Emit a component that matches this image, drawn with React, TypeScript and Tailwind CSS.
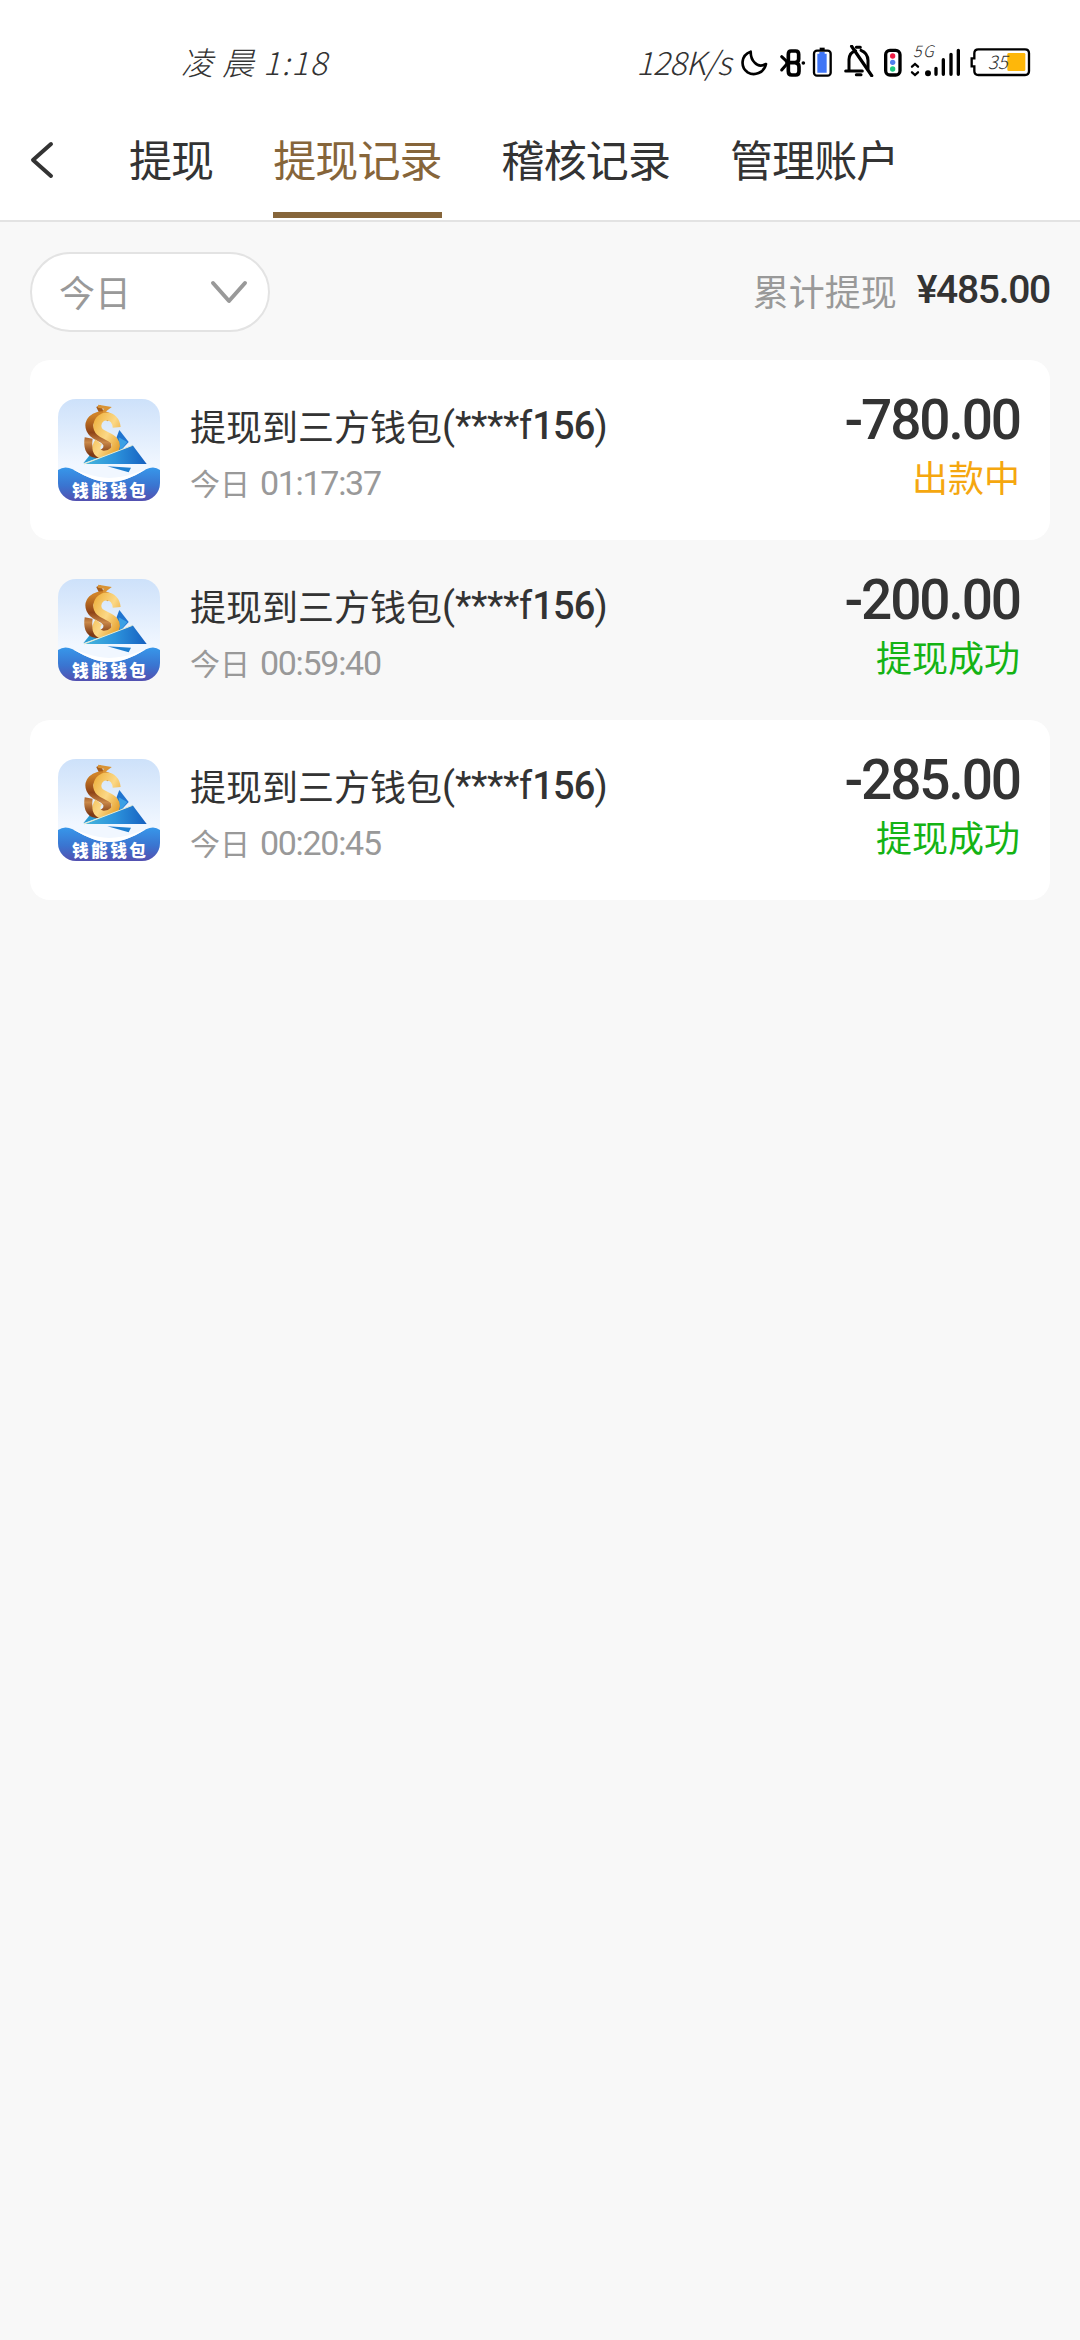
import { useState } from 'react'

type RecordItem = {
  id: number
  title: string
  account: string
  time: string
  amount: string
  status: 'pending' | 'success'
}

const TABS = ['提现', '提现记录', '稽核记录', '管理账户']

const RECORDS: RecordItem[] = [
  { id: 1, title: '提现到三方钱包', account: 'f156', time: '01:17:37', amount: '-780.00', status: 'pending' },
  { id: 2, title: '提现到三方钱包', account: 'f156', time: '00:59:40', amount: '-200.00', status: 'success' },
  { id: 3, title: '提现到三方钱包', account: 'f156', time: '00:20:45', amount: '-285.00', status: 'success' },
]

const STATUS = {
  pending: { text: '出款中', className: 'text-[#f5a70f]' },
  success: { text: '提现成功', className: 'text-[#14b314]' },
}

function StatusIcons() {
  return (
    <div className="flex h-8">
      {/* moon */}
      <svg className="h-8 w-[33px]" viewBox="355 44 99 96" fill="none" stroke="#000" strokeWidth="8" strokeLinejoin="round">
        <path d="M387 64C358 74 355 110 378 126C398 138 427 128 433 101C420 108 407 106 399 97C390 88 387 76 387 64Z" />
      </svg>
      {/* bluetooth */}
      <svg className="h-8 w-[35px]" viewBox="454 44 105 96" fill="none" stroke="#000" strokeWidth="11" strokeLinecap="round" strokeLinejoin="round">
        <path d="M500 72Q500 62 508 62H522Q531 62 531 72V86Q531 96 520 97H496M508 97H520Q532 98 532 109V123Q532 134 522 134H510Q500 134 500 123V72" />
        <path d="M480 79L499 97L480 119" strokeWidth="9" />
        <circle cx="545" cy="98" r="3" fill="#000" strokeWidth="5" />
      </svg>
      {/* phone battery */}
      <svg className="h-8 w-[27px]" viewBox="559 44 81 96" fill="none">
        <path d="M594 52H609V62H594Z" fill="#000" />
        <rect x="577" y="61" width="50" height="75" rx="9" fill="#fff" stroke="#000" strokeWidth="7" />
        <path d="M593 65H609V70H615V127H587V70H593Z" fill="#3f75f6" />
      </svg>
      {/* muted bell */}
      <svg className="h-8 w-[46px]" viewBox="10 44 138 96" fill="none" stroke="#000" strokeWidth="9" strokeLinecap="round">
        <path d="M52 120V88Q53 66 72 62M88 60Q108 68 109 90V116M42 122H92M74 51H86" />
        <path d="M74 133H88" strokeWidth="9" />
        <path d="M60 48L120 136" strokeWidth="10" />
      </svg>
      {/* traffic light */}
      <svg className="h-8 w-[28px]" viewBox="148 44 84 96">
        <rect x="162" y="60" width="43" height="74" rx="13" fill="#fff" stroke="#000" strokeWidth="10" />
        <circle cx="183" cy="77" r="8" fill="#ee1c43" />
        <circle cx="183" cy="96" r="8" fill="#4f7ff0" />
        <circle cx="183" cy="116" r="8" fill="#1fc982" />
      </svg>
      {/* signal */}
      <svg className="h-8 w-[60px] overflow-visible" viewBox="232 44 180 96" fill="none" stroke="#000" strokeWidth="10" strokeLinecap="round">
        <text
          x="244"
          y="81"
          fontSize="48"
          fontStyle="italic"
          fontWeight="300"
          fill="#333"
          stroke="none"
          textLength="62"
          className="font-['Noto_Sans_CJK_SC',sans-serif]"
        >
          5G
        </text>
        <path d="M241 109L250 101L259 109M241 126L250 134L259 126" strokeWidth="7" />
        <circle cx="289" cy="129" r="4" fill="#000" />
        <path d="M313 114V132M335 88V132M358 72V132M380 60V132" />
      </svg>
      {/* battery level */}
      <svg className="h-8 w-[64px]" viewBox="412 44 192 96" fill="none">
        <path
          d="M440 57H580Q592 57 592 69V122Q592 134 580 134H440Q428 134 428 122V108H420V84H428V69Q428 57 440 57Z"
          stroke="#000"
          strokeWidth="7"
        />
        <rect x="527" y="68" width="54" height="54" rx="4" fill="#feb70a" />
        <text
          x="468"
          y="117"
          fontSize="56"
          fontStyle="italic"
          fontWeight="300"
          fill="#333"
          className="font-['Noto_Sans_CJK_SC',sans-serif]"
        >
          35
        </text>
      </svg>
    </div>
  )
}

function StatusBar() {
  return (
    <div className="flex h-[104px] items-start justify-between pt-[45px] pr-[47px] pl-[181px] font-['Noto_Sans_CJK_SC',sans-serif] font-light text-[#333] italic">
      <div className="mt-[-2px] flex h-9 items-center text-[32px] leading-none">
        <span className="tracking-[9px]">凌晨</span>
        <span className="tracking-[1.5px]">1:18</span>
      </div>
      <div className="flex">
        <span className="mt-[-2px] mr-[9px] flex h-9 items-center text-[32px] leading-none tracking-[-0.6px]">128K/s</span>
        <StatusIcons />
      </div>
    </div>
  )
}

function WalletIcon() {
  return (
    <svg className="size-[102px] shrink-0 rounded-[18px]" viewBox="54 57 306 306">
      <defs>
        <linearGradient id="sky" x1="0" y1="0" x2="0" y2="1">
          <stop offset="0" stopColor="#cde1fa" />
          <stop offset="0.65" stopColor="#f1f7ff" />
        </linearGradient>
        <linearGradient id="wave" x1="0" y1="0" x2="0" y2="1">
          <stop offset="0" stopColor="#3797ea" />
          <stop offset="0.55" stopColor="#3a74d0" />
          <stop offset="1" stopColor="#5350b0" />
        </linearGradient>
        <linearGradient id="sail" x1="0" y1="0" x2="1" y2="0">
          <stop offset="0" stopColor="#47b7dc" />
          <stop offset="0.5" stopColor="#2c93dc" />
          <stop offset="1" stopColor="#1660c0" />
        </linearGradient>
        <linearGradient id="gold" x1="0" y1="0" x2="1" y2="1">
          <stop offset="0" stopColor="#f0b544" />
          <stop offset="0.5" stopColor="#fbd886" />
          <stop offset="1" stopColor="#e59f2c" />
        </linearGradient>
        <linearGradient id="bronze" x1="0" y1="0" x2="0" y2="1">
          <stop offset="0" stopColor="#cf8226" />
          <stop offset="0.45" stopColor="#8f4317" />
          <stop offset="0.7" stopColor="#c98848" />
          <stop offset="1" stopColor="#7f3a14" />
        </linearGradient>
      </defs>
      <rect x="54" y="57" width="306" height="306" fill="url(#sky)" />
      <path d="M238 150L266 186L240 214L214 214Z" fill="#1f74d0" />
      <path d="M236 172L262 186L240 214Z" fill="#3ba0e4" />
      <path d="M130 250L152 222L180 232Z" fill="#2b9bd2" />
      <g fill="none" strokeLinecap="butt">
        <path d="M175 78L182 92L186 104" stroke="#a35a1b" strokeWidth="14" />
        <path
          d="M212 116C196 96 150 106 148 136C148 162 176 170 192 180C214 196 200 222 170 222C146 220 142 198 146 174"
          stroke="url(#bronze)"
          strokeWidth="24"
        />
        <path d="M174 79L204 84L193 92V108" stroke="#d99334" strokeWidth="9" />
        <path
          d="M230 142C226 98 176 102 172 136C170 164 206 164 222 182C238 204 214 226 188 224C168 220 164 202 176 186"
          stroke="url(#gold)"
          strokeWidth="24"
        />
      </g>
      <path d="M132 252L278 196L320 252Z" fill="url(#sail)" />
      <path d="M132 252L278 196" stroke="#e6ecd0" strokeWidth="3" />
      <path d="M202 259L273 263L266 277Z" fill="#1f7fd0" />
      <path d="M54 270Q74 256 98 268C150 296 170 306 207 306C246 306 270 296 318 268Q342 256 360 270V363H54Z" fill="url(#wave)" />
      <path d="M98 268C150 296 170 306 207 306C246 306 270 296 318 268C290 278 262 292 207 294C160 292 130 278 98 268Z" fill="#fff" />
      <text
        x="96"
        y="350"
        fontSize="50"
        fontWeight="900"
        fill="#fff"
        textLength="222"
        className="font-['Noto_Sans_CJK_SC',sans-serif]"
      >
        钱能钱包
      </text>
    </svg>
  )
}

function RecordRow({ item }: { item: RecordItem }) {
  const status = STATUS[item.status]
  return (
    <li className="flex h-[180px] rounded-[20px] pt-[39px] pr-[30px] pl-7 odd:bg-white">
      <WalletIcon />
      <div className="ml-[30px] flex-1">
        <div className="flex h-[54px] items-center text-[36px] leading-none text-[#333]">
          <span className="mt-[-3px]">{item.title}</span>
          <span className="font-['Roboto',sans-serif] text-[38px]">
            (<span className="tracking-[-0.4px]">****</span>
            {item.account.slice(0, 1)}
            <span className="font-medium tracking-[-0.8px]">{item.account.slice(1)}</span>)
          </span>
        </div>
        <div className="mt-[3px] flex h-[54px] items-center text-[30px] leading-none text-[#999]">
          <span className="mt-[-2px]">今日</span>
          <span className="ml-[10px] font-['Roboto',sans-serif] text-[34px] tracking-[-1.3px]">{item.time}</span>
        </div>
      </div>
      <div className="flex flex-col items-end">
        <div className="mt-[-10px] flex h-[62px] items-center font-['Roboto',sans-serif] text-[55px] leading-none font-medium tracking-[-2.1px] text-[#333]">
          {item.amount}
        </div>
        <div className={`mt-[-2px] flex h-[54px] items-center text-[36px] leading-none ${status.className}`}>
          {status.text}
        </div>
      </div>
    </li>
  )
}

export default function App() {
  const [active, setActive] = useState('提现记录')

  return (
    <div className="min-h-[2340px] w-[1080px] bg-[#f8f8f8] font-['Noto_Sans_CJK_SC',sans-serif] text-[#333]">
      <header className="h-[222px] border-b-2 border-[#e3e3e3] bg-white">
        <StatusBar />
        <nav className="flex h-[114px] pl-[30px]">
          <button type="button" className="mr-[75px] pb-[2px]">
            <svg className="h-[38px] w-6" viewBox="0 0 24 38" fill="none" stroke="#333" strokeWidth="4" strokeLinecap="round" strokeLinejoin="round">
              <path d="M21 3L3 19L21 35" />
            </svg>
          </button>
          <div className="flex gap-[60px]">
            {TABS.map((tab) => (
              <button
                key={tab}
                type="button"
                onClick={() => setActive(tab)}
                className={
                  tab === active
                    ? 'border-b-[6px] border-[#86653a] text-[43px] leading-none tracking-[-0.9px] text-[#86653a]'
                    : 'border-b-[6px] border-transparent text-[43px] leading-none tracking-[-0.9px]'
                }
              >
                {tab}
              </button>
            ))}
          </div>
        </nav>
      </header>

      <main className="px-[30px] pt-[30px]">
        <div className="flex h-20 items-center justify-between">
          <button
            type="button"
            className="flex h-20 w-[240px] items-center justify-between rounded-full border-2 border-[#e3e3e3] bg-white pr-5 pl-[27px] text-[36px] leading-none text-[#999]"
          >
            <span className="mt-[-3px]">今日</span>
            <svg className="h-6 w-[38px]" viewBox="0 0 38 24" fill="none" stroke="#999" strokeWidth="4" strokeLinecap="round" strokeLinejoin="round">
              <path d="M3 3L19 21L35 3" />
            </svg>
          </button>
          <div className="mt-[-4px] flex items-center text-[36px] leading-none">
            <span className="text-[#999]">累计提现</span>
            <span className="ml-5 font-['Roboto',sans-serif] text-[39px] font-medium tracking-[-1.3px]">¥485.00</span>
          </div>
        </div>

        <ul className="mt-7">
          {RECORDS.map((item) => (
            <RecordRow key={item.id} item={item} />
          ))}
        </ul>
      </main>
    </div>
  )
}
